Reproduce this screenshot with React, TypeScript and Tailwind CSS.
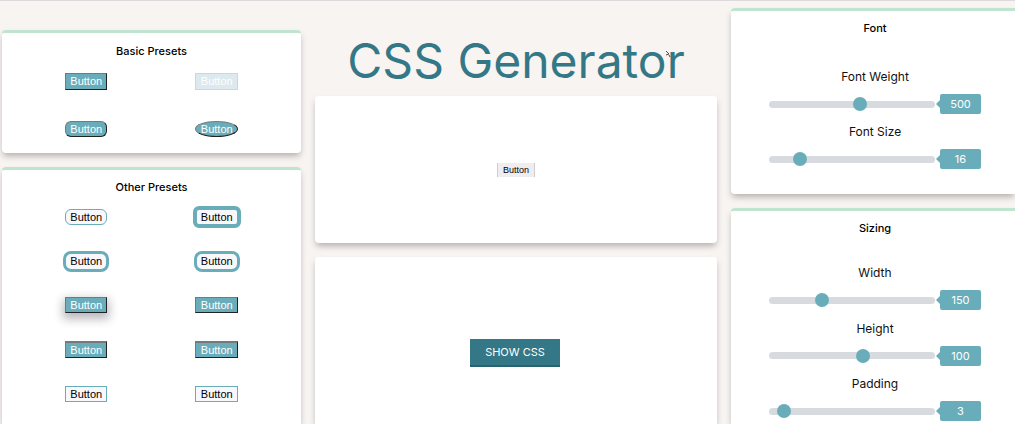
import { useState, type ReactNode } from "react";
import clsx from "clsx";

const outset =
  "border border-t-[#74797b] border-l-[#74797b] border-r-[#202325] border-b-[#202325] bg-[#6aadba] text-white";

const basicPresets = [
  { name: "default", style: clsx(outset, "h-[17px] w-[42px]") },
  { name: "faded", style: "h-[17px] w-[43px] border border-[#d2d5d7] bg-[#dce9ee] text-white" },
  { name: "rounded", style: clsx(outset, "h-4 w-[42px] rounded-md") },
  { name: "oval", style: clsx(outset, "h-4 w-[43px] rounded-[50%]") },
];

const outline = "border-[#6aadba] bg-[#f8f7fb] text-black";

const otherPresets = [
  { name: "thin outline", style: clsx(outline, "h-4 w-[42px] rounded-md border") },
  { name: "thick outline", style: clsx(outline, "h-[22px] w-[48px] rounded-md border-4") },
  { name: "medium outline", style: clsx(outline, "h-[21px] w-[46px] rounded-lg border-3") },
  { name: "medium outline two", style: clsx(outline, "h-[21px] w-[46px] rounded-lg border-3") },
  { name: "shadow", style: clsx(outset, "h-4 w-[42px] shadow-[0_4px_10px_2px_rgba(40,35,50,0.32)]") },
  { name: "flat", style: clsx(outset, "h-4 w-[43px]") },
  { name: "raised", style: clsx(outset, "h-[17px] w-[42px] border-t-2") },
  { name: "raised two", style: clsx(outset, "h-[17px] w-[43px] border-t-2") },
  { name: "square outline", style: clsx(outline, "h-4 w-[42px] border") },
  { name: "square outline two", style: clsx(outline, "h-4 w-[43px] border") },
];

function Card({ className, children }: { className?: string; children: ReactNode }) {
  return (
    <section className={clsx("bg-white shadow-[0_4px_6px_-1px_rgba(60,50,50,0.35)]", className)}>
      {children}
    </section>
  );
}

function Heading({ children }: { children: ReactNode }) {
  return <h2 className="text-center text-[11px] leading-4 font-medium text-black">{children}</h2>;
}

function Presets({ items, className }: { items: typeof basicPresets; className: string }) {
  return (
    <div className={clsx("grid grid-cols-2 place-items-center px-[19px]", className)}>
      {items.map((item) => (
        <button
          key={item.name}
          type="button"
          className={clsx(
            "flex items-center justify-center font-['Liberation_Sans',sans-serif] text-[11px] leading-3",
            item.style,
          )}
        >
          Button
        </button>
      ))}
    </div>
  );
}

function Slider({ id, label, initial, max }: { id: string; label: string; initial: number; max: number }) {
  const [value, setValue] = useState(initial);
  return (
    <div>
      <label htmlFor={id} className="block text-center text-[12px] leading-4 text-[#111]">
        {label}
      </label>
      <div className="mt-[9px] flex items-center">
        <input
          id={id}
          type="range"
          min={0}
          max={max}
          value={value}
          onChange={(e) => setValue(Number(e.target.value))}
          className="h-[7px] min-w-0 flex-1 appearance-none rounded-full bg-[#d7dbe0] [&::-webkit-slider-thumb]:h-3.5 [&::-webkit-slider-thumb]:w-3.5 [&::-webkit-slider-thumb]:appearance-none [&::-webkit-slider-thumb]:rounded-full [&::-webkit-slider-thumb]:bg-[#6aadba]"
        />
        <svg className="ml-px h-2 w-1" viewBox="0 0 4 8" aria-hidden="true">
          <path d="M4 0v8L0 4z" fill="#6aadba" />
        </svg>
        <output
          htmlFor={id}
          className="h-5 w-[41px] rounded-xs bg-[#6aadba] text-center text-[11px] leading-5 text-white"
        >
          {value}
        </output>
      </div>
    </div>
  );
}

export default function App() {
  return (
    <div className="min-h-screen border-t border-[#dddadd] bg-[#f8f4f1] font-[Inter,sans-serif]">
      <main className="grid min-h-[calc(100vh-1px)] grid-cols-[299fr_402fr_284fr] gap-3.5 pl-0.5">
        <div className="flex flex-col gap-3.5 pt-[29px]">
          <Card className="rounded-sm border-t-3 border-[#bfe5d0] pt-2.5">
            <Heading>Basic Presets</Heading>
            <Presets items={basicPresets} className="-mt-0.5 auto-rows-[48px]" />
          </Card>
          <Card className="flex flex-1 flex-col rounded-t-sm border-t-3 border-[#bfe5d0] pt-[9px] pb-2">
            <Heading>Other Presets</Heading>
            <Presets items={otherPresets} className="flex-1 auto-rows-fr" />
          </Card>
        </div>

        <div className="flex flex-col">
          <div className="flex h-[95px] justify-center pt-7">
            <h1 className="relative text-[48px] leading-[64px] font-normal whitespace-nowrap text-[#347887]">
              CSS Generator
              <svg className="absolute top-[21px] right-3.5 h-2 w-1.5" viewBox="0 0 6 8" aria-hidden="true">
                <path d="M1 1l3 3-3 1M4 5l1 2" fill="none" stroke="#222" strokeWidth="0.8" />
              </svg>
            </h1>
          </div>
          <Card className="flex h-[147px] items-center justify-center rounded-sm">
            <button
              type="button"
              className="h-3.5 w-[38px] border-x border-[#d0ced2] bg-[#efedf0] font-['Liberation_Sans',sans-serif] text-[9px] leading-3 text-black"
            >
              Button
            </button>
          </Card>
          <Card className="mt-3.5 flex flex-1 items-start justify-center rounded-t-sm pt-[82px] pr-0.5">
            <button
              type="button"
              className="h-7 border-b-2 border-[#2a6370] bg-[#347887] px-[15px] text-[11px] leading-4 text-white"
            >
              SHOW CSS
            </button>
          </Card>
        </div>

        <div className="flex flex-col gap-3.5 pt-[7px]">
          <Card className="rounded-l-sm border-t-3 border-[#bfe5d0] pt-[9px] pr-[34px] pb-[25px] pl-[38px]">
            <Heading>Font</Heading>
            <div className="mt-[33px] flex flex-col gap-2.5">
              <Slider id="font-weight" label="Font Weight" initial={500} max={900} />
              <Slider id="font-size" label="Font Size" initial={16} max={100} />
            </div>
          </Card>
          <Card className="flex flex-1 flex-col rounded-tl-sm border-t-3 border-[#bfe5d0] pt-[9px] pr-[34px] pb-[3px] pl-[38px]">
            <Heading>Sizing</Heading>
            <div className="mt-[29px] flex flex-1 flex-col justify-between">
              <Slider id="width" label="Width" initial={150} max={500} />
              <Slider id="height" label="Height" initial={100} max={175} />
              <Slider id="padding" label="Padding" initial={3} max={55} />
            </div>
          </Card>
        </div>
      </main>
    </div>
  );
}
